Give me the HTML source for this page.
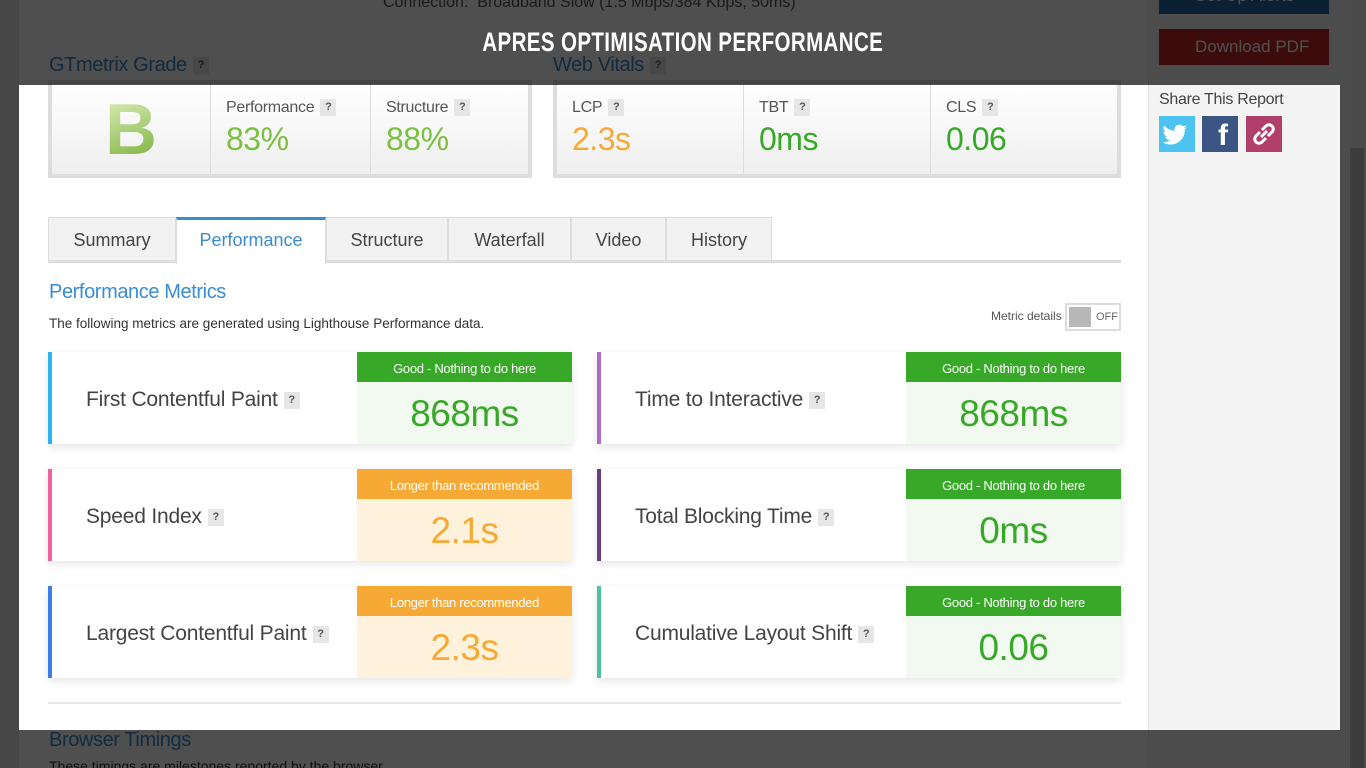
<!DOCTYPE html>
<html style="overflow:hidden;width:1366px;height:768px"><head><meta charset="utf-8"><style>
*{margin:0;padding:0;box-sizing:border-box}
body{width:1366px;height:768px;overflow:hidden;position:relative;background:#fff;font-family:"Liberation Sans",sans-serif;color:#444}
.a{position:absolute}
.q{display:inline-block;width:16px;height:17px;background:#e6e6e6;color:#555;font-size:11px;font-weight:bold;text-align:center;line-height:17px;vertical-align:middle;margin-left:6px}
.box{border:4px solid #ddd;background:linear-gradient(#fff,#efefef)}
.cell{position:absolute;top:0;bottom:0;border-left:1px solid #ddd;padding:15px 0 0 15px}
.cell .l{font-size:16px;color:#555;letter-spacing:-0.3px}
.cell .v{font-size:32px;margin-top:4px;letter-spacing:-0.5px}
.tab{position:absolute;top:217px;height:45px;background:#f2f2f2;border:1px solid #ddd;border-bottom:none;font-size:18px;color:#444;text-align:center;line-height:44px}
.card{position:absolute;width:524px;height:92px;background:#fff;box-shadow:0 3px 8px rgba(0,0,0,0.1)}
.card .bar{position:absolute;left:0;top:0;bottom:0;width:4px}
.card .n{position:absolute;left:38px;top:36px;font-size:21px;color:#444;letter-spacing:-0.2px}
.card .r{position:absolute;left:309px;top:0;width:215px;height:92px}
.card .h{height:30px;color:#fff;font-size:13px;text-align:center;line-height:33px;letter-spacing:-0.3px}
.card .val{height:62px;text-align:center;font-size:37px;line-height:64px;letter-spacing:-0.5px}
.g .h{background:#38a828}.g .val{background:#f2f9f0;color:#38a828}
.o .h{background:#f6a934}.o .val{background:#fff2dd;color:#f6a934}
#hole{position:absolute;left:19px;top:85px;width:1321px;height:645px;box-shadow:0 0 0 3000px rgba(0,0,0,0.69);z-index:5}
</style></head><body>
<div class="a" style="left:0;top:0;width:19px;height:768px;background:#e6e6e6"></div>
<div class="a" style="left:1148px;top:0;width:200px;height:768px;background:#f4f4f4;border-left:1px solid #e6e6e6"></div>
<div class="a" style="left:1348px;top:0;width:18px;height:768px;background:#f0f0f0"></div>
<div class="a" style="left:1350px;top:148px;width:14px;height:620px;background:#c2c2c2"></div>

<div class="a" style="left:383px;top:-6px;font-size:16px;color:#555">Connection: &nbsp;Broadband Slow (1.5 Mbps/384 Kbps, 50ms)</div>

<div class="a" style="left:49px;top:54px;font-size:20px;color:#3a85c8;letter-spacing:-0.4px">GTmetrix Grade<span class="q">?</span></div>
<div class="a" style="left:553px;top:54px;font-size:20px;color:#3a85c8;letter-spacing:-0.4px">Web Vitals<span class="q">?</span></div>

<div class="a box" style="left:48px;top:80px;width:484px;height:98px">
 <div class="a" style="left:0;top:0;width:158px;height:90px;text-align:center;font-size:72px;font-weight:bold;line-height:92px"><span style="background:linear-gradient(160deg,#e6f2c4,#6fab2e);-webkit-background-clip:text;background-clip:text;color:transparent">B</span></div>
 <div class="cell" style="left:158px;width:160px"><div class="l">Performance<span class="q">?</span></div><div class="v" style="color:#7cc043">83%</div></div>
 <div class="cell" style="left:318px;width:160px"><div class="l">Structure<span class="q">?</span></div><div class="v" style="color:#7cc043">88%</div></div>
</div>
<div class="a box" style="left:553px;top:80px;width:568px;height:98px">
 <div class="cell" style="left:0;border-left:none;width:186px"><div class="l">LCP<span class="q">?</span></div><div class="v" style="color:#f6a934">2.3s</div></div>
 <div class="cell" style="left:186px;width:187px"><div class="l">TBT<span class="q">?</span></div><div class="v" style="color:#38a828">0ms</div></div>
 <div class="cell" style="left:373px;width:187px"><div class="l">CLS<span class="q">?</span></div><div class="v" style="color:#38a828">0.06</div></div>
</div>

<div class="tab" style="left:48px;width:128px">Summary</div>
<div class="tab" style="left:176px;width:150px;background:#fff;border-top:3px solid #3a8cd0;color:#3a8cd0;height:47px;line-height:40px;z-index:2">Performance</div>
<div class="tab" style="left:326px;width:122px">Structure</div>
<div class="tab" style="left:448px;width:123px">Waterfall</div>
<div class="tab" style="left:571px;width:95px">Video</div>
<div class="tab" style="left:666px;width:106px">History</div>
<div class="a" style="left:48px;top:260px;width:1073px;height:3px;background:#ddd"></div>

<div class="a" style="left:49px;top:281px;font-size:20px;color:#3a8cd0;letter-spacing:-0.4px">Performance Metrics</div>
<div class="a" style="left:49px;top:316px;font-size:13.5px;color:#333">The following metrics are generated using Lighthouse Performance data.</div>
<div class="a" style="left:991px;top:309px;font-size:12px;color:#555">Metric details</div>
<div class="a" style="left:1065px;top:303px;width:56px;height:28px;border:2px solid #ddd;background:#fff"><div class="a" style="left:2px;top:2px;width:22px;height:20px;background:#b8b8b8"></div><div class="a" style="left:29px;top:6px;font-size:11px;color:#666">OFF</div></div>

<div class="card g" style="left:48px;top:352px"><div class="bar" style="background:#2eb4f0"></div><div class="n">First Contentful Paint<span class="q">?</span></div><div class="r"><div class="h">Good - Nothing to do here</div><div class="val">868ms</div></div></div>
<div class="card g" style="left:597px;top:352px"><div class="bar" style="background:#b06cc8"></div><div class="n">Time to Interactive<span class="q">?</span></div><div class="r"><div class="h">Good - Nothing to do here</div><div class="val">868ms</div></div></div>
<div class="card o" style="left:48px;top:469px"><div class="bar" style="background:#f0609e"></div><div class="n">Speed Index<span class="q">?</span></div><div class="r"><div class="h">Longer than recommended</div><div class="val">2.1s</div></div></div>
<div class="card g" style="left:597px;top:469px"><div class="bar" style="background:#6a3f80"></div><div class="n">Total Blocking Time<span class="q">?</span></div><div class="r"><div class="h">Good - Nothing to do here</div><div class="val">0ms</div></div></div>
<div class="card o" style="left:48px;top:586px"><div class="bar" style="background:#3f7ee8"></div><div class="n">Largest Contentful Paint<span class="q">?</span></div><div class="r"><div class="h">Longer than recommended</div><div class="val">2.3s</div></div></div>
<div class="card g" style="left:597px;top:586px"><div class="bar" style="background:#4ec09a"></div><div class="n">Cumulative Layout Shift<span class="q">?</span></div><div class="r"><div class="h">Good - Nothing to do here</div><div class="val">0.06</div></div></div>

<div class="a" style="left:48px;top:702px;width:1073px;height:2px;background:#e8e8e8"></div>
<div class="a" style="left:49px;top:729px;font-size:20px;color:#3a8cd0;letter-spacing:-0.4px">Browser Timings</div>
<div class="a" style="left:49px;top:758px;font-size:14px;color:#333;height:10px;overflow:hidden">These timings are milestones reported by the browser.</div>

<div class="a" style="left:1159px;top:-22px;width:170px;height:36px;background:#2468a8;color:#fff;font-size:17px;padding:8px 0 0 36px">Set Up Alerts</div>
<div class="a" style="left:1159px;top:29px;width:170px;height:36px;background:#c0282a;color:#fff;font-size:17px;padding:8px 0 0 36px">Download PDF</div>
<div class="a" style="left:1159px;top:91px;font-size:16px;color:#444;letter-spacing:-0.3px">Share This Report</div>
<div class="a" style="left:1159px;top:116px;width:36px;height:36px;background:#4dc3ef"><svg width="36" height="36" viewBox="0 0 36 36"><path d="M28 11c-1 .5-2 .7-3 .8 1-.7 1.8-1.6 2.2-2.8-1 .6-2 1-3.2 1.2a5 5 0 0 0-8.5 4.5c-4.2-.2-7.8-2.2-10.3-5.2-1.4 2.4-.6 5.3 1.6 6.7-.8 0-1.6-.3-2.3-.6 0 2.4 1.7 4.5 4 5-.8.2-1.5.2-2.3.1.7 2 2.5 3.4 4.7 3.4A10 10 0 0 1 4 26.2 14 14 0 0 0 25.7 14v-.6c1-.7 1.8-1.5 2.300-2.4z" fill="#fff"/></svg></div>
<div class="a" style="left:1202px;top:116px;width:36px;height:36px;background:#3b5584;color:#fff;font-size:30px;font-weight:bold;text-align:center;line-height:40px;padding-left:6px">f</div>
<div class="a" style="left:1246px;top:116px;width:36px;height:36px;background:#b0406a"><svg width="36" height="36" viewBox="0 0 36 36" fill="none" stroke="#fff" stroke-width="3"><path d="M16 14l4-4a4 4 0 0 1 6 6l-4 4"/><path d="M20 22l-4 4a4 4 0 0 1-6-6l4-4"/><path d="M15 21l6-6"/></svg></div>

<div id="hole"></div>
<div class="a" style="left:0;top:27px;width:1366px;text-align:center;z-index:6;color:#fff;font-weight:bold;font-size:27px;"><span style="display:inline-block;transform:scaleX(0.76);letter-spacing:0.5px">APRES OPTIMISATION PERFORMANCE</span></div>
</body></html>
